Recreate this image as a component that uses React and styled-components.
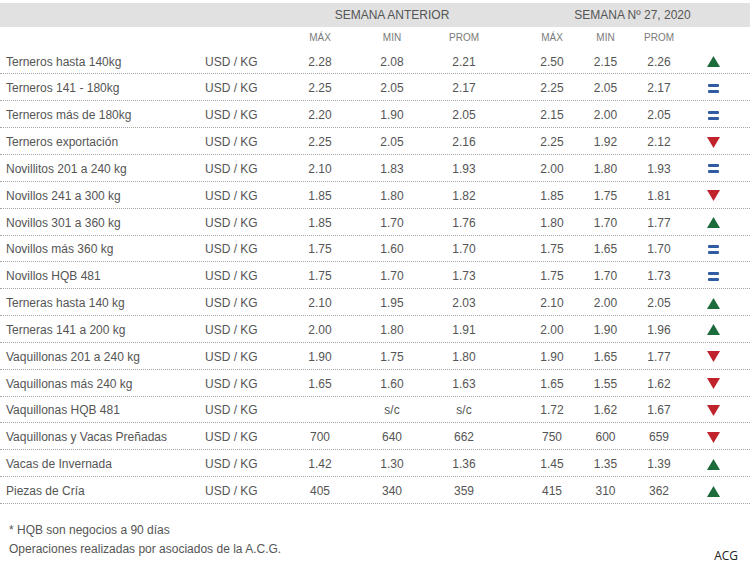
import React from "react";
import styled, { createGlobalStyle } from "styled-components";

const GlobalStyle = createGlobalStyle`
  body {
    margin: 0;
    background: #fff;
    font-family: "Liberation Sans", Arial, sans-serif;
  }
`;

const COLS = "200px 84px 72px 72px 72px 25px 54px 53px 54px 54px 10px";

const Page = styled.div`
  width: 750px;
  padding-top: 3px;
  color: #555;
  font-size: 12px;
`;

const HeadBar = styled.div`
  display: grid;
  grid-template-columns: ${COLS};
  height: 24px;
  align-items: center;
  background: #e1e1e1;
  color: #555;
  font-size: 12px;
`;

const GroupTitle = styled.div`
  grid-column: ${(p) => p.$span};
  text-align: center;
`;

const SubHead = styled.div`
  display: grid;
  grid-template-columns: ${COLS};
  height: 20.6px;
  align-items: center;
  font-size: 10px;
  color: #7a7a7a;
`;

const Row = styled.div`
  display: grid;
  grid-template-columns: ${COLS};
  height: 26.85px;
  box-sizing: border-box;
  padding-top: 2px;
  align-items: center;
  border-bottom: 1px dotted #a5a5a5;
`;

const Name = styled.div`
  padding-left: 6px;
  white-space: nowrap;
`;

const Unit = styled.div`
  padding-left: 5px;
  white-space: nowrap;
`;

const Cell = styled.div`
  text-align: center;
`;

const IconCell = styled.div`
  display: flex;
  justify-content: center;
  align-items: center;
`;

const Bars = styled.div`
  display: flex;
  flex-direction: column;
  gap: 3px;
`;

const Bar = styled.span`
  display: block;
  width: 11px;
  height: 3px;
  border-radius: 1px;
  background: #2f5ca3;
`;

const Footer = styled.div`
  display: flex;
  justify-content: space-between;
  padding-top: 17px;
`;

const Notes = styled.div`
  padding-left: 9px;
  line-height: 19px;
  color: #555;
`;

const Brand = styled.div`
  padding-top: 26px;
  padding-right: 12px;
  color: #222;
  font-family: "Open Sans", "DejaVu Sans", sans-serif;
  font-size: 12px;
`;

function Trend({ dir }) {
  if (dir === "eq") {
    return (
      <Bars>
        <Bar />
        <Bar />
      </Bars>
    );
  }
  const up = dir === "up";
  return (
    <svg width="13" height="11" viewBox="0 0 13 11">
      <polygon
        points={up ? "6.5,0 13,11 0,11" : "0,0 13,0 6.5,11"}
        fill={up ? "#1c6b3b" : "#c0232c"}
      />
    </svg>
  );
}

const rows = [
  ["Terneros hasta 140kg", "2.28", "2.08", "2.21", "2.50", "2.15", "2.26", "up"],
  ["Terneros 141 - 180kg", "2.25", "2.05", "2.17", "2.25", "2.05", "2.17", "eq"],
  ["Terneros más de 180kg", "2.20", "1.90", "2.05", "2.15", "2.00", "2.05", "eq"],
  ["Terneros exportación", "2.25", "2.05", "2.16", "2.25", "1.92", "2.12", "down"],
  ["Novillitos 201 a 240 kg", "2.10", "1.83", "1.93", "2.00", "1.80", "1.93", "eq"],
  ["Novillos 241 a 300 kg", "1.85", "1.80", "1.82", "1.85", "1.75", "1.81", "down"],
  ["Novillos 301 a 360 kg", "1.85", "1.70", "1.76", "1.80", "1.70", "1.77", "up"],
  ["Novillos más 360 kg", "1.75", "1.60", "1.70", "1.75", "1.65", "1.70", "eq"],
  ["Novillos HQB 481", "1.75", "1.70", "1.73", "1.75", "1.70", "1.73", "eq"],
  ["Terneras hasta 140 kg", "2.10", "1.95", "2.03", "2.10", "2.00", "2.05", "up"],
  ["Terneras 141 a 200 kg", "2.00", "1.80", "1.91", "2.00", "1.90", "1.96", "up"],
  ["Vaquillonas 201 a 240 kg", "1.90", "1.75", "1.80", "1.90", "1.65", "1.77", "down"],
  ["Vaquillonas más 240 kg", "1.65", "1.60", "1.63", "1.65", "1.55", "1.62", "down"],
  ["Vaquillonas HQB 481", "", "s/c", "s/c", "1.72", "1.62", "1.67", "down"],
  ["Vaquillonas y Vacas Preñadas", "700", "640", "662", "750", "600", "659", "down"],
  ["Vacas de Invernada", "1.42", "1.30", "1.36", "1.45", "1.35", "1.39", "up"],
  ["Piezas de Cría", "405", "340", "359", "415", "310", "362", "up"],
];

export default function App() {
  return (
    <Page>
      <GlobalStyle />
      <HeadBar>
        <GroupTitle $span="3 / 6">SEMANA ANTERIOR</GroupTitle>
        <GroupTitle $span="7 / 11">SEMANA Nº 27, 2020</GroupTitle>
      </HeadBar>
      <SubHead>
        <div />
        <div />
        <Cell>MÁX</Cell>
        <Cell>MIN</Cell>
        <Cell>PROM</Cell>
        <div />
        <Cell>MÁX</Cell>
        <Cell>MIN</Cell>
        <Cell>PROM</Cell>
      </SubHead>
      {rows.map(([name, a, b, c, d, e, f, dir]) => (
        <Row key={name}>
          <Name>{name}</Name>
          <Unit>USD / KG</Unit>
          <Cell>{a}</Cell>
          <Cell>{b}</Cell>
          <Cell>{c}</Cell>
          <div />
          <Cell>{d}</Cell>
          <Cell>{e}</Cell>
          <Cell>{f}</Cell>
          <IconCell>
            <Trend dir={dir} />
          </IconCell>
        </Row>
      ))}
      <Footer>
        <Notes>
          <div>* HQB son negocios a 90 días</div>
          <div>Operaciones realizadas por asociados de la A.C.G.</div>
        </Notes>
        <Brand>ACG</Brand>
      </Footer>
    </Page>
  );
}
